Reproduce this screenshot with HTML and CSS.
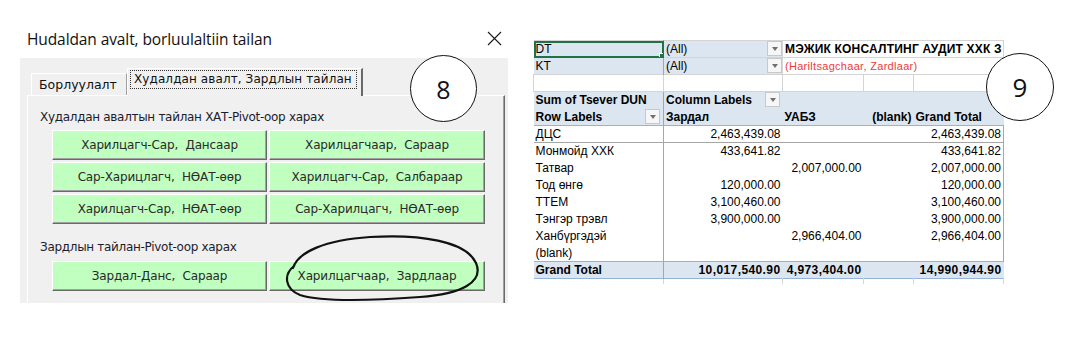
FILE: index.html
```html
<!DOCTYPE html>
<html lang="en">
<head>
    <meta charset="UTF-8">
    <title>Hudaldan avalt, borluulaltiin tailan</title>
    <link rel="stylesheet" href="styles.css">
</head>
<body>
    <div class="page">
        <div class="dialog">
            <div class="titlebar">
                <span class="title">Hudaldan avalt, borluulaltiin tailan</span>
                <svg class="close" width="15" height="15" viewBox="0 0 15 15"><path d="M1 1L14 14M14 1L1 14" stroke="#1a1a1a" stroke-width="1.1" fill="none"/></svg>
            </div>
            <div class="dlg-body">
                <div class="tabs">
                    <div class="tab">Борлуулалт</div>
                    <div class="tab active"><span class="focus">Худалдан авалт, Зардлын тайлан</span></div>
                </div>
                <div class="panel">
                    <div class="sec-label">Худалдан авалтын тайлан ХАТ-Pivot-оор харах</div>
                    <div class="btn-grid">
                        <button class="btn">Харилцагч-Сар,&nbsp; Дансаар</button>
                        <button class="btn">Харилцагчаар,&nbsp; Сараар</button>
                        <button class="btn">Сар-Харицлагч,&nbsp; НӨАТ-өөр</button>
                        <button class="btn">Харилцагч-Сар,&nbsp; Салбараар</button>
                        <button class="btn">Харилцагч-Сар,&nbsp; НӨАТ-өөр</button>
                        <button class="btn">Сар-Харилцагч,&nbsp; НӨАТ-өөр</button>
                    </div>
                    <div class="sec-label second">Зардлын тайлан-Pivot-оор харах</div>
                    <div class="btn-grid">
                        <button class="btn">Зардал-Данс,&nbsp; Сараар</button>
                        <button class="btn">Харилцагчаар,&nbsp; Зардлаар</button>
                    </div>
                </div>
                <svg class="scribble" width="205" height="75" viewBox="0 0 205 75"><path d="M13,36 C18,20 45,8 90,5 C140,2 186,9 196,31 C204,50 182,62 140,65 C100,68 45,71 20,63 C5,57 3,43 14,34" stroke="#111" stroke-width="2.2" fill="none" stroke-linecap="round"/></svg>
            </div>
            <div class="badge b8">8</div>
        </div>

        <div class="sheet">
            <table class="pivot">
                <colgroup>
                    <col style="width:130px"><col style="width:119px"><col style="width:81px"><col style="width:50px"><col style="width:90px">
                </colgroup>
                <tr class="filter">
                    <td class="fa sel">DT</td>
                    <td class="fb">(All)<span class="dd"></span></td>
                    <td class="ttl" colspan="3">МЭЖИК КОНСАЛТИНГ АУДИТ ХХК З</td>
                </tr>
                <tr class="filter">
                    <td class="fa">KT</td>
                    <td class="fb">(All)<span class="dd"></span></td>
                    <td class="sub" colspan="3">(Hariltsagchaar, Zardlaar)</td>
                </tr>
                <tr class="empty">
                    <td></td><td></td><td></td><td></td><td></td>
                </tr>
                <tr class="head">
                    <td>Sum of Tsever DUN</td>
                    <td>Column Labels<span class="dd"></span></td>
                    <td></td><td></td><td class="last"></td>
                </tr>
                <tr class="head labels">
                    <td>Row Labels<span class="dd"></span></td>
                    <td>Зардал</td>
                    <td>УАБЗ</td>
                    <td class="num">(blank)</td>
                    <td class="last">Grand Total</td>
                </tr>
                <tr class="row first">
                    <td>ДЦС</td><td class="num">2,463,439.08</td><td></td><td></td><td class="num last">2,463,439.08</td>
                </tr>
                <tr class="row">
                    <td>Монмойд ХХК</td><td class="num">433,641.82</td><td></td><td></td><td class="num last">433,641.82</td>
                </tr>
                <tr class="row">
                    <td>Татвар</td><td></td><td class="num">2,007,000.00</td><td></td><td class="num last">2,007,000.00</td>
                </tr>
                <tr class="row">
                    <td>Тод өнгө</td><td class="num">120,000.00</td><td></td><td></td><td class="num last">120,000.00</td>
                </tr>
                <tr class="row">
                    <td>ТТЕМ</td><td class="num">3,100,460.00</td><td></td><td></td><td class="num last">3,100,460.00</td>
                </tr>
                <tr class="row">
                    <td>Тэнгэр трэвл</td><td class="num">3,900,000.00</td><td></td><td></td><td class="num last">3,900,000.00</td>
                </tr>
                <tr class="row">
                    <td>Ханбүргэдэй</td><td></td><td class="num">2,966,404.00</td><td></td><td class="num last">2,966,404.00</td>
                </tr>
                <tr class="row">
                    <td>(blank)</td><td></td><td></td><td></td><td class="last"></td>
                </tr>
                <tr class="total">
                    <td>Grand Total</td><td class="num">10,017,540.90</td><td class="num">4,973,404.00</td><td></td><td class="num last">14,990,944.90</td>
                </tr>
                <tr class="tail">
                    <td></td><td></td><td></td><td></td><td></td>
                </tr>
            </table>
            <div class="badge b9">9</div>
        </div>
    </div>
</body>
</html>
```

FILE: styles.css
```css
body{margin:0;background:#fff;font-family:"Liberation Sans",Arial,sans-serif;overflow:hidden}
.page{display:flex;align-items:flex-start}

/* dialog */
.dialog{position:relative;width:488px;margin:20px 0 0 20px}
.titlebar{height:38px;display:flex;align-items:center;justify-content:space-between;padding:0 6px 0 7px;background:#fff}
.title{font-family:"Open Sans",sans-serif;font-size:15.5px;color:#111;letter-spacing:-0.1px}
.close{display:block;margin-bottom:2px}
.dlg-body{position:relative;height:245px;background:#f0f0f0;padding:10px 0 0 7px;box-sizing:border-box}
.tabs{display:flex;align-items:flex-end;height:27px;padding-left:4px;position:relative;z-index:1}
.tab{width:96px;height:22px;box-sizing:border-box;padding:0 0 0 7px;display:flex;align-items:center;white-space:nowrap;font-family:"DejaVu Sans",sans-serif;font-size:12.5px;color:#111;border-top:1px solid #fff;border-left:1px solid #fff;border-right:1px solid #a0a0a0;background:#f0f0f0}
.tab.active{width:236px;height:28px;margin-bottom:-1px;padding:0 0 6px 2px;border-right:2px solid #696969;font-size:12px;letter-spacing:0.1px}
.focus{border:1px dotted #333;padding:1px 4px 2px 3px}
.panel{width:478px;height:208px;box-sizing:border-box;border-top:1px solid #fff;border-left:1px solid #fff;border-right:1px solid #696969;box-shadow:inset -1px 0 #a0a0a0;padding:13px 0 0 12px}
.sec-label{font-family:"DejaVu Sans",sans-serif;font-size:12px;line-height:16px;color:#1c1c2c;margin-bottom:5px;letter-spacing:-0.3px}
.sec-label.second{margin-top:15px;margin-bottom:6px}
.btn-grid{display:grid;grid-template-columns:215px 216px;grid-auto-rows:30px;gap:2px;margin-left:12px}
.btn{background:#c0ffc0;border:none;border-top:1px solid #fff;border-left:1px solid #fff;border-right:1px solid #696969;border-bottom:1px solid #696969;box-shadow:inset -1px -1px #a0a0a0;font-family:"DejaVu Sans",sans-serif;font-size:12px;color:#2a2a2a;padding:0;margin:0;letter-spacing:-0.15px}
.scribble{position:absolute;left:260px;top:174px}

/* annotation badges */
.badge{position:absolute;border:1px solid #111;border-radius:50%;background:#fff;display:flex;align-items:center;justify-content:center;font-family:"Open Sans",sans-serif;color:#111;box-sizing:border-box}
.b8{left:390px;top:35px;width:67px;height:67px;font-size:25px}
.b9{left:453px;top:13px;width:68px;height:68px;font-size:26px}

/* pivot sheet */
.sheet{position:relative;margin:40px 0 0 25px}
.pivot{border-collapse:collapse;table-layout:fixed;width:470px;font-size:12px;color:#000}
.pivot td{height:17px;padding:0 2px;line-height:16px;white-space:nowrap;overflow:hidden;box-sizing:border-box}
.pivot .num{text-align:right}
.dd{float:right;position:relative;width:15px;height:15px;margin:0 0 0 2px;box-sizing:border-box;border:1px solid #c8c8c8;background:#f6f6f6}
.dd::after{content:"";position:absolute;left:4px;top:5px;border-left:3px solid transparent;border-right:3px solid transparent;border-top:4px solid #707070}
.filter td{border-top:1px solid #d4d4d4;border-right:1px solid #d4d4d4}
.filter .fa,.filter .fb{background:#dce6f1}
.filter .fa{border-right:1px solid #a6a6a6}
.filter .fb{padding-right:0}
.sel{position:relative;outline:2px solid #217346;outline-offset:-2px}
.sel::after{content:"";position:absolute;right:-3px;bottom:-3px;width:5px;height:5px;background:#217346;border:1px solid #fff}
.ttl{font-weight:bold;font-size:12px;letter-spacing:0.2px}
.sub{color:#f03a3a;font-size:11px;letter-spacing:0.3px}
.empty td{border:1px solid #d4d4d4}
.head td{background:#dce6f1;font-weight:bold}
.head td:first-child{border-right:1px solid #a6a6a6}
.head .dd{margin-right:1px}
.labels td{border-bottom:1px solid #95b3d7}
.row td:first-child{border-right:1px solid #a6a6a6}
.row .last{border-right:1px solid #a6a6a6}
.row.first td{border-bottom:1px solid #a6a6a6}
.total td{background:#dce6f1;font-weight:bold;border-top:1px solid #95b3d7;letter-spacing:0.4px}
.total td:first-child{border-right:1px solid #a6a6a6;letter-spacing:0}
.tail td{height:5px;border-right:1px solid #d4d4d4;border-top:1px solid #95b3d7}
```
